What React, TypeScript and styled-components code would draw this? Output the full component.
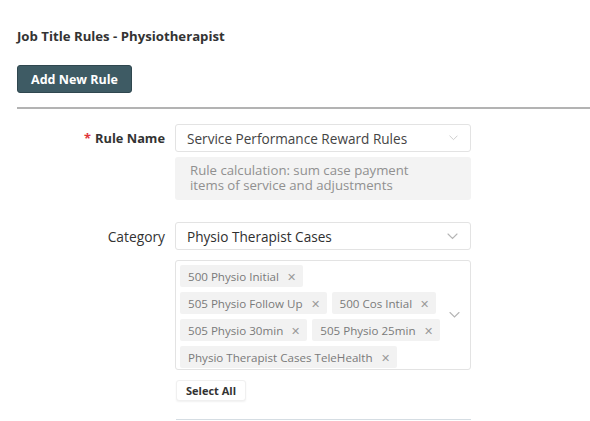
import React from "react";
import styled, { createGlobalStyle } from "styled-components";

const Global = createGlobalStyle`
  html, body { margin: 0; padding: 0; background: #ffffff; }
  body { font-family: "Open Sans", "Noto Sans", sans-serif; color: #333; }
  * { box-sizing: border-box; }
`;

const Page = styled.div`
  padding: 28px 0 0 17px;
  width: 590px;
  height: 421px;
  overflow: hidden;
`;

const Title = styled.h1`
  margin: 0;
  font-size: 13.2px;
  line-height: 17px;
  font-weight: 700;
  color: #333;
`;

const PrimaryButton = styled.button`
  margin-top: 20px;
  height: 28px;
  width: 115px;
  border: 1px solid #2f474f;
  border-radius: 3px;
  background: #3e5b64;
  color: #fff;
  font-family: inherit;
  font-weight: 700;
  font-size: 12.5px;
  padding: 0;
`;

const Divider = styled.div`
  margin-top: 14px;
  height: 2px;
  background: #b3b3b3;
`;

const Form = styled.div`
  padding-top: 15px;
  display: flex;
  flex-direction: column;
`;

const Row = styled.div<{ $mt?: number }>`
  display: grid;
  grid-template-columns: 148px 296px;
  column-gap: 10px;
  margin-top: ${(p) => p.$mt ?? 0}px;
  align-items: start;
`;

const Label = styled.div<{ $bold?: boolean }>`
  height: 28px;
  display: flex;
  align-items: center;
  justify-content: flex-end;
  font-size: ${(p) => (p.$bold ? 12.8 : 13.8)}px;
  font-weight: ${(p) => (p.$bold ? 700 : 400)};
  color: #333;
`;

const Star = styled.span`
  color: #e0353b;
  margin-right: 4px;
  font-weight: 700;
`;

const Field = styled.div`
  display: flex;
  flex-direction: column;
`;

const Select = styled.div<{ $dark?: boolean }>`
  height: 28px;
  border: 1px solid #e3e3e3;
  border-radius: 3px;
  display: flex;
  align-items: center;
  padding: 0 12px 0 11px;
  font-size: 13.6px;
  color: ${(p) => (p.$dark ? "#2f2f2f" : "#444")};
  justify-content: space-between;
  background: #fff;
`;

const Description = styled.div`
  margin-top: 5px;
  background: #f3f3f3;
  border-radius: 3px;
  padding: 6px 40px 6px 15px;
  font-size: 13.2px;
  line-height: 15px;
  color: #909090;
  min-height: 43px;
`;

const MultiBox = styled.div`
  margin-top: 10px;
  border: 1px solid #e3e3e3;
  border-radius: 3px;
  padding: 4px 30px 3px 4px;
  position: relative;
  height: 110px;
`;

const Tags = styled.div`
  display: flex;
  flex-wrap: wrap;
  gap: 5px 5px;
  align-content: flex-start;
`;

const Tag = styled.span`
  height: 22px;
  display: inline-flex;
  align-items: center;
  background: #f2f2f2;
  border-radius: 2px;
  padding: 0 7px 0 8px;
  font-size: 11.6px;
  color: #7a7a7a;
  white-space: nowrap;
`;

const Close = styled.span`
  margin-left: 8px;
  color: #9a9a9a;
  font-size: 11px;
`;

const ChevronSlot = styled.span`
  position: absolute;
  right: 10px;
  top: 50%;
  transform: translateY(-50%);
  display: flex;
`;

const GhostButton = styled.button`
  margin-top: 10px;
  width: 70px;
  height: 21px;
  border: 1px solid #f0f0f0;
  border-radius: 3px;
  background: #fff;
  box-shadow: 0 1px 2px rgba(0, 0, 0, 0.06);
  font-family: inherit;
  font-weight: 700;
  font-size: 11px;
  color: #333;
  padding: 0;
  margin-left: 1px;
`;

const NextField = styled.div`
  margin-top: 18px;
  height: 4px;
  border-top: 1px solid #d5dde3;
  margin-left: 1px;
`;

const Chevron = ({ color = "#b5b5b5", size = 11 }: { color?: string; size?: number }) => (
  <svg width={size} height={Math.round(size * 0.64)} viewBox="0 0 11 7" fill="none">
    <path d="M1 1l4.5 4.5L10 1" stroke={color} strokeWidth="1.1" strokeLinecap="round" />
  </svg>
);

const tags = [
  "500 Physio Initial",
  "505 Physio Follow Up",
  "500 Cos Intial",
  "505 Physio 30min",
  "505 Physio 25min",
  "Physio Therapist Cases TeleHealth",
];

export default function App() {
  return (
    <Page>
      <Global />
      <Title>Job Title Rules - Physiotherapist</Title>
      <PrimaryButton>Add New Rule</PrimaryButton>
      <Divider />
      <Form>
        <Row>
          <Label $bold>
            <Star>*</Star>Rule Name
          </Label>
          <Field>
            <Select>
              <span>Service Performance Reward Rules</span>
              <Chevron color="#c8c8c8" size={9} />
            </Select>
            <Description>
              Rule calculation: sum case payment items of service and adjustments
            </Description>
          </Field>
        </Row>
        <Row $mt={22}>
          <Label>Category</Label>
          <Field>
            <Select $dark>
              <span>Physio Therapist Cases</span>
              <Chevron />
            </Select>
            <MultiBox>
              <Tags>
                {tags.map((t) => (
                  <Tag key={t}>
                    {t}
                    <Close>✕</Close>
                  </Tag>
                ))}
              </Tags>
              <ChevronSlot>
                <Chevron />
              </ChevronSlot>
            </MultiBox>
            <div>
              <GhostButton>Select All</GhostButton>
            </div>
            <NextField />
          </Field>
        </Row>
      </Form>
    </Page>
  );
}
